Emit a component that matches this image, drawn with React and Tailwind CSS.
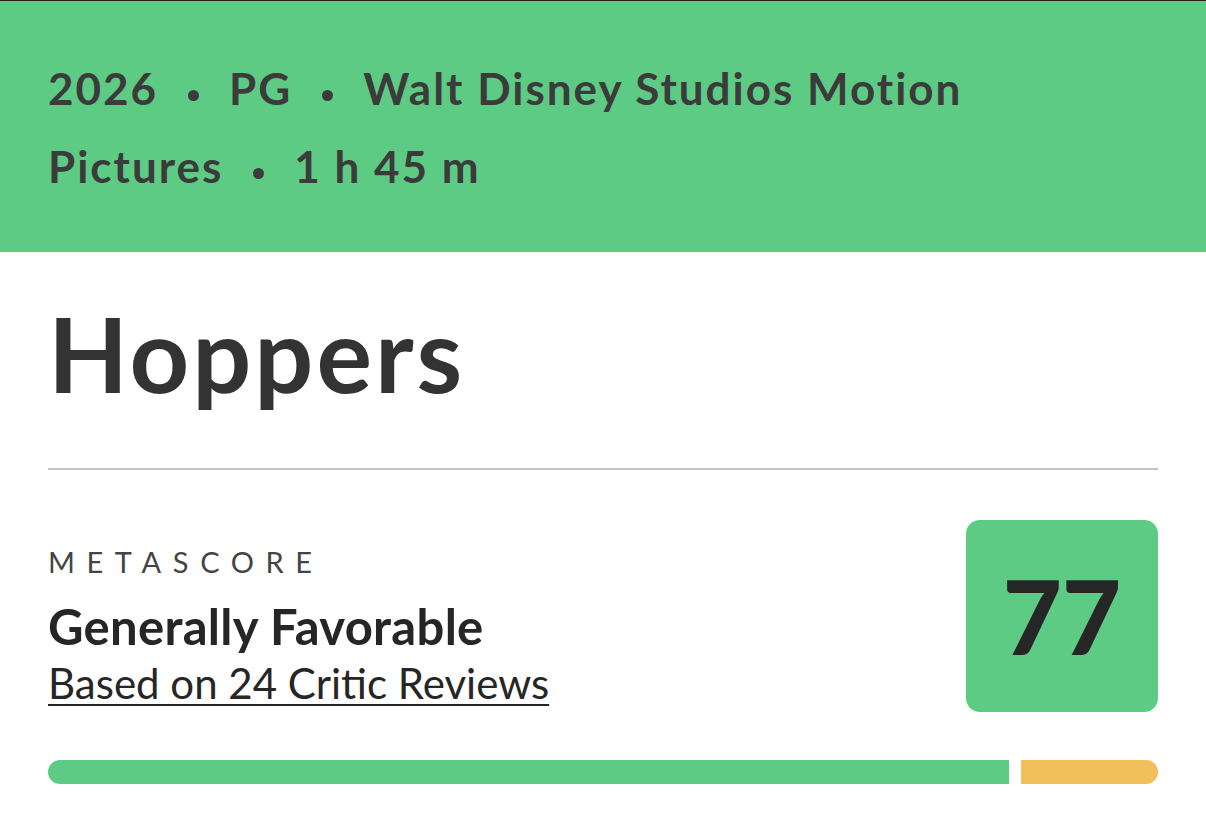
import React from "react";

const FONT = { fontFamily: "Lato, 'Open Sans', 'Liberation Sans', sans-serif" };

function Dot() {
  return (
    <span className="inline-block w-[11px] h-[11px] rounded-full bg-[#3b3b3b] mx-[30px] align-[4px]" />
  );
}

export default function App() {
  return (
    <div className="w-[1206px] h-[834px] bg-white overflow-hidden border-t border-[#222]" style={FONT}>
      {/* Header with details */}
      <div className="bg-[#5ecb84] px-[48px] pt-[48px] pb-[47px]">
        <p className="text-[44px] leading-[78px] font-bold tracking-[2px] text-[#3b3b3b] max-w-[980px]">
          2026<Dot />PG<Dot />Walt Disney Studios Motion Pictures<Dot />1 h 45 m
        </p>
      </div>

      <div className="px-[48px]">
        {/* Title */}
        <h1 className="pt-[43px] pb-[57px] text-[104px] leading-[116px] font-bold tracking-[3px] text-[#333333]">
          Hoppers
        </h1>
        <div className="h-[2px] bg-[#c2c2c2]" />

        {/* Metascore */}
        <div className="flex items-start justify-between pt-[50px]">
          <div className="pt-[24px]">
            <div className="text-[29px] leading-[36px] tracking-[0.4em] text-[#444]">METASCORE</div>
            <div className="mt-[18px] text-[49px] leading-[56px] font-bold tracking-[0.3px] text-[#262626]">
              Generally Favorable
            </div>
            <a className="block mt-[4px] text-[42px] leading-[50px] text-[#262626] underline decoration-2 underline-offset-[5px]">
              Based on 24 Critic Reviews
            </a>
          </div>
          <div className="w-[192px] h-[192px] rounded-[14px] bg-[#5ecb84] flex items-center justify-center">
            <span className="text-[102px] leading-none font-black text-[#262626]">77</span>
          </div>
        </div>

        {/* Distribution bar */}
        <div className="flex gap-[12px] mt-[48px] h-[24px]">
          <div className="flex-[961] bg-[#5ecb84] rounded-l-full" />
          <div className="flex-[137] bg-[#f2bf5a] rounded-r-full" />
        </div>
      </div>
    </div>
  );
}
